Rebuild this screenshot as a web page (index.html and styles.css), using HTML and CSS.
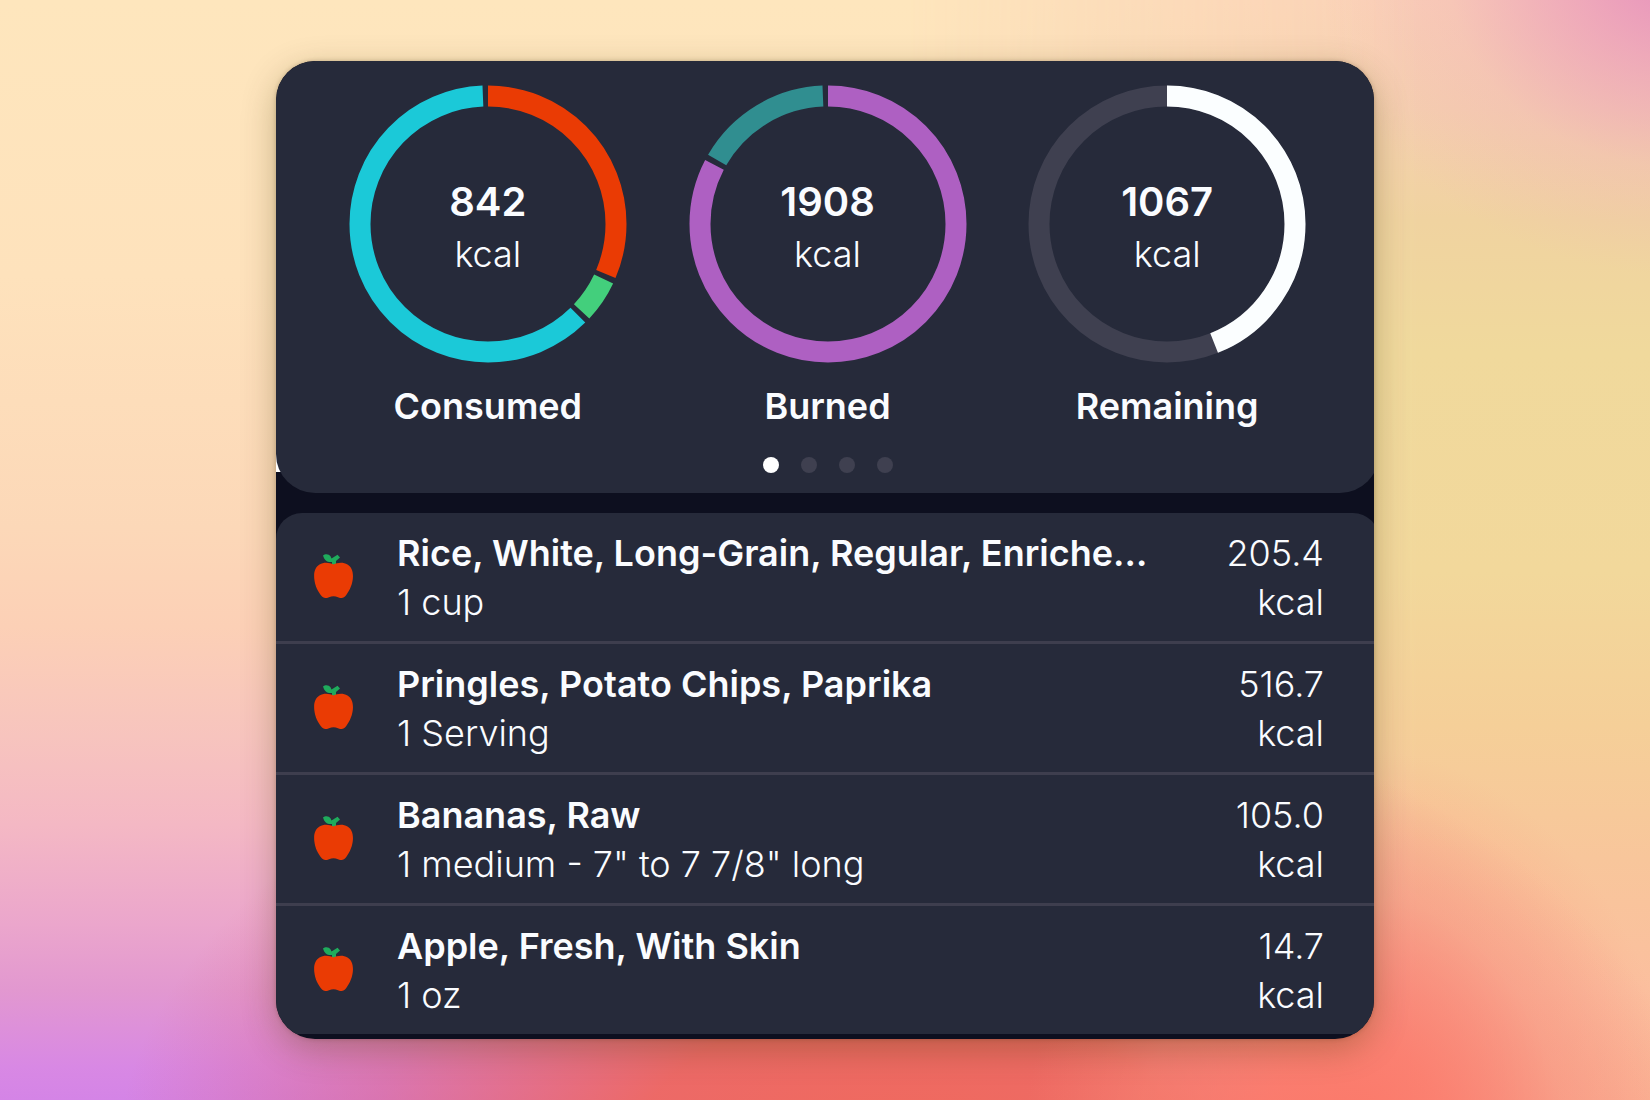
FILE: index.html
```html
<!DOCTYPE html>
<html lang="en">
<head>
  <meta charset="UTF-8" />
  <meta name="viewport" content="width=device-width, initial-scale=1" />
  <title>Calorie Diary</title>
  <link rel="stylesheet" href="styles.css">
</head>
<body>
  <svg class="sprite" aria-hidden="true">
    <symbol id="apple" viewBox="0 0 39 44">
      <path fill="#1fab5c" d="M9 1.500C11-.5 15-.3 16.500 2.200L17.500 4.500 23.500.8 26 3.500 22 7V12H18V8C13.500 8.600 10.500 6.500 9 1.500Z"/>
      <path fill="#ea3b04" d="M19.500 10.500C23 8.800 29 7.800 33.500 10.500 38 13.300 39.500 18.500 38.800 25 38 32 34.500 38.500 31 42.500 29 44.500 26 44.300 24 43.300 21 41.800 18 41.800 15 43.300 13 44.300 10 44.500 8 42.500 4 38 1 32 .3 25-.4 18.500 1 13.300 5.500 10.500 10 7.800 16 8.800 19.500 10.500Z"/>
    </symbol>
  </svg>

  <main class="card">
    <section class="summary">
      <div class="rings">
        <figure class="stat">
          <div class="ring">
            <svg viewBox="0 0 278 278" aria-hidden="true">
              <circle class="arc red" cx="139" cy="139" r="128" pathLength="360" stroke-dasharray="113 360" />
              <circle class="arc green" cx="139" cy="139" r="128" pathLength="360" stroke-dasharray="17.600 360" stroke-dashoffset="-115.400" />
              <circle class="arc cyan" cx="139" cy="139" r="128" pathLength="360" stroke-dasharray="222.300 360" stroke-dashoffset="-135.400" />
            </svg>
            <p class="amount"><strong>842</strong><span>kcal</span></p>
          </div>
          <figcaption>Consumed</figcaption>
        </figure>
        <figure class="stat">
          <div class="ring">
            <svg viewBox="0 0 278 278" aria-hidden="true">
              <circle class="arc purple" cx="139" cy="139" r="128" pathLength="360" stroke-dasharray="297.500 360" />
              <circle class="arc teal" cx="139" cy="139" r="128" pathLength="360" stroke-dasharray="57.700 360" stroke-dashoffset="-300" />
            </svg>
            <p class="amount"><strong>1908</strong><span>kcal</span></p>
          </div>
          <figcaption>Burned</figcaption>
        </figure>
        <figure class="stat">
          <div class="ring">
            <svg viewBox="0 0 278 278" aria-hidden="true">
              <circle class="arc track" cx="139" cy="139" r="128" />
              <circle class="arc white" cx="139" cy="139" r="128" pathLength="360" stroke-dasharray="158.400 360" />
            </svg>
            <p class="amount"><strong>1067</strong><span>kcal</span></p>
          </div>
          <figcaption>Remaining</figcaption>
        </figure>
      </div>
      <nav class="dots" aria-label="Summary pages">
        <button class="dot active" aria-label="Page 1"></button>
        <button class="dot" aria-label="Page 2"></button>
        <button class="dot" aria-label="Page 3"></button>
        <button class="dot" aria-label="Page 4"></button>
      </nav>
    </section>

    <ul class="foods">
      <li class="food">
        <svg class="apple" aria-hidden="true"><use href="#apple" /></svg>
        <div class="info">
          <h2>Rice, White, Long-Grain, Regular, Enriche…</h2>
          <p>1 cup</p>
        </div>
        <p class="energy">205.4<br>kcal</p>
      </li>
      <li class="food">
        <svg class="apple" aria-hidden="true"><use href="#apple" /></svg>
        <div class="info">
          <h2>Pringles, Potato Chips, Paprika</h2>
          <p>1 Serving</p>
        </div>
        <p class="energy">516.7<br>kcal</p>
      </li>
      <li class="food">
        <svg class="apple" aria-hidden="true"><use href="#apple" /></svg>
        <div class="info">
          <h2>Bananas, Raw</h2>
          <p>1 medium - 7" to 7 7/8" long</p>
        </div>
        <p class="energy">105.0<br>kcal</p>
      </li>
      <li class="food">
        <svg class="apple" aria-hidden="true"><use href="#apple" /></svg>
        <div class="info">
          <h2>Apple, Fresh, With Skin</h2>
          <p>1 oz</p>
        </div>
        <p class="energy">14.7<br>kcal</p>
      </li>
    </ul>
  </main>
</body>
</html>
```
FILE: styles.css
```css
:root {
  --panel: #262a3a;
  --dark: #0d0f1f;
  --line: #3e3e4e;
  --text: #fafcff;
}
* {
  box-sizing: border-box;
}
body {
  position: relative;
  z-index: 0;
  margin: 0;
  min-height: 100vh;
  padding: 61px 24px;
  font-family: Inter, sans-serif;
  font-size: 36px;
  font-weight: 300;
  line-height: 49px;
  color: var(--text);
  background: linear-gradient(#fee6bd 0%, #fee2bc 25%, #fcd8b8 48%, #fcd0b6 57%, #f7c4be 67%, #f4b8c4 75%, #eba6cc 84%, #e298d0 90%, #d888e4 97%, #d484e6 100%);
}
/* backdrop: right-hand colours, then the warm glow along the bottom */
body::before,
body::after {
  content: "";
  position: absolute;
  inset: 0;
  z-index: -1;
}
body::before {
  background:
    radial-gradient(ellipse 22% 28% at 102% -3%, #e68fbd 0%, rgba(234, 152, 188, 0.7) 30%, rgba(240, 175, 185, 0.3) 65%, rgba(244, 190, 180, 0) 100%),
    linear-gradient(#fad0b6 0%, #f5cfae 10%, #f0d3a0 20%, #f0d99c 32%, #f2d89b 52%, #f5cf98 66%, #f8c69b 78%, #fbbf9e 90%, #fcb595 100%);
  -webkit-mask-image: linear-gradient(to right, transparent 55%, #000 86%);
  mask-image: linear-gradient(to right, transparent 55%, #000 86%);
}
body::after {
  background:
    radial-gradient(ellipse 20% 38% at 82% 106%, #fb7868 0%, rgba(254, 125, 108, 0.8) 30%, rgba(255, 150, 125, 0.35) 65%, rgba(255, 165, 130, 0) 100%),
    radial-gradient(ellipse 48% 44% at 55% 106%, #f06a5c 0%, rgba(238, 104, 96, 0.95) 35%, rgba(224, 98, 112, 0.45) 68%, rgba(230, 120, 125, 0) 100%);
}
h2, p, ul, figure {
  margin: 0;
  padding: 0;
}
.sprite {
  position: absolute;
  width: 0;
  height: 0;
}
.card {
  position: relative;
  max-width: 1098px;
  margin: 0 auto;
  padding-bottom: 5px;
  background: var(--dark);
  border-radius: 39px;
  overflow: hidden;
  box-shadow: 0 0 4px rgba(60, 40, 10, 0.25), 0 10px 34px rgba(70, 60, 0, 0.3);
}
/* light corner behind the summary panel */
.card::before {
  content: "";
  position: absolute;
  left: 0;
  top: 380px;
  width: 12px;
  height: 31px;
  background: #fff;
}

/* summary */
.summary {
  position: relative;
  margin-right: -5px;
  padding: 24px 42px 20px;
  background: var(--panel);
  border-radius: 39px;
}
.rings {
  display: flex;
  justify-content: center;
}
.stat {
  flex: 0 1 340px;
  text-align: center;
}
.ring {
  display: grid;
  place-items: center;
}
.ring > * {
  grid-area: 1 / 1;
}
.ring svg {
  display: block;
  width: 278px;
  max-width: 90%;
  transform: rotate(-90deg);
}
.arc {
  fill: none;
  stroke-width: 21;
}
.red { stroke: #ea3b04; }
.green { stroke: #43cf7c; }
.cyan { stroke: #1bc9d8; }
.purple { stroke: #ae60c2; }
.teal { stroke: #308e90; }
.track { stroke: #3f4050; }
.white { stroke: #fbfeff; }
.amount {
  padding-top: 4px;
}
.amount strong,
.amount span {
  display: block;
}
.amount strong {
  font-size: 40px;
  font-weight: 600;
  line-height: 56px;
}
figcaption {
  margin-top: 19px;
  font-weight: 600;
}
.dots {
  display: flex;
  justify-content: center;
  gap: 22px;
  margin-top: 26px;
}
.dot {
  width: 16px;
  height: 16px;
  padding: 0;
  border: none;
  border-radius: 50%;
  background: #3f4050;
  cursor: pointer;
}
.dot.active {
  background: #fff;
}

/* food list */
.foods {
  margin: 20px -5px 0 0;
  list-style: none;
  background: var(--panel);
  border-radius: 26px 26px 0 0;
}
.food {
  display: flex;
  align-items: center;
  padding: 16px 55px 14px 38px;
}
.food + .food {
  border-top: 3px solid var(--line);
}
.apple {
  flex: none;
  width: 39px;
  height: 44px;
  margin: 0 44px 4px 0;
}
.info {
  flex: 1;
  min-width: 0;
}
.info h2 {
  font-size: 36px;
  font-weight: 600;
  line-height: 49px;
  white-space: nowrap;
  overflow: hidden;
  text-overflow: ellipsis;
}
.energy {
  flex: none;
  text-align: right;
}
```
